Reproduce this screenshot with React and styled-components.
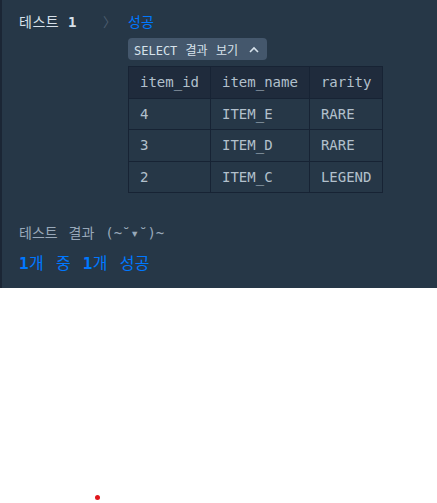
import React from 'react';
import styled, { createGlobalStyle } from 'styled-components';

const GlobalStyle = createGlobalStyle`
  html, body {
    margin: 0;
    padding: 0;
    background: #ffffff;
  }
  body {
    font-family: "DejaVu Sans Mono", "Noto Sans CJK KR", monospace;
  }
`

const Page = styled.div`
  position: relative;
  width: 437px;
  height: 503px;
`

const Panel = styled.section`
  background: #263747;
  border-left: 2px solid #1b2635;
  height: 288px;
  box-sizing: border-box;
  padding: 12px 0 0 17px;
  color: #d6e0ea;
  font-size: 14px;
`

const ResultRow = styled.div`
  display: grid;
  grid-template-columns: 84px 25px auto;
  align-items: start;
`

const Label = styled.div`
  line-height: 21px;
  letter-spacing: 0.5px;
  b {
    font-weight: bold;
  }
`

const Chevron = styled.div`
  line-height: 21px;
  color: #4c5d6f;
  font-size: 13px;
`

const Content = styled.div`
  display: flex;
  flex-direction: column;
  align-items: flex-start;
`

const Status = styled.div`
  line-height: 21px;
  color: ${(p) => p.color || '#0078ff'};
`

const ToggleButton = styled.button`
  margin-top: 5px;
  height: 22px;
  padding: 0 8px 0 6px;
  display: flex;
  align-items: center;
  gap: 11px;
  background: #44576c;
  color: #d7e2eb;
  border: none;
  border-radius: 4px;
  font-family: inherit;
  font-size: 12px;
  word-spacing: 1px;
  svg {
    display: block;
  }
`

const Table = styled.table`
  margin-top: 6px;
  border-collapse: collapse;
  font-size: 14px;
  th, td {
    border: 1px solid #172334;
    text-align: left;
    padding: 0 11px;
    height: 30.5px;
    white-space: nowrap;
  }
  th {
    background: #1f2b3c;
    color: #b2c0cc;
    font-weight: normal;
  }
  td {
    background: #263747;
    color: #b2c0cc;
  }
`

const Summary = styled.div`
  margin-top: 30px;
  display: flex;
  flex-direction: column;
  gap: 9px;
`

const SummaryTitle = styled.div`
  line-height: 21px;
  color: #98a8b9;
  word-spacing: 2.5px;
`

const SummaryResult = styled.div`
  line-height: 21px;
  font-size: 16px;
  color: #0078ff;
  word-spacing: 2px;
  letter-spacing: 0.3px;
  b {
    font-weight: bold;
  }
`

const Dot = styled.span`
  position: absolute;
  left: 95px;
  top: 495px;
  width: 5px;
  height: 5px;
  border-radius: 50%;
  background: #e0161b;
`

const rows = [
  { id: 4, name: 'ITEM_E', rarity: 'RARE' },
  { id: 3, name: 'ITEM_D', rarity: 'RARE' },
  { id: 2, name: 'ITEM_C', rarity: 'LEGEND' },
];

const App = () => (
  <Page>
    <GlobalStyle />
    <Panel>
      <ResultRow>
        <Label>테스트 <b>1</b></Label>
        <Chevron>〉</Chevron>
        <Content>
          <Status>성공</Status>
          <ToggleButton>
            SELECT 결과 보기
            <svg width="10" height="7" viewBox="0 0 10 7">
              <path d="M1 6 L5 2 L9 6" fill="none" stroke="#d7e2eb" strokeWidth="1.6" />
            </svg>
          </ToggleButton>
          <Table>
            <thead>
              <tr>
                <th>item_id</th>
                <th>item_name</th>
                <th>rarity</th>
              </tr>
            </thead>
            <tbody>
              {rows.map((r) => (
                <tr key={r.id}>
                  <td>{r.id}</td>
                  <td>{r.name}</td>
                  <td>{r.rarity}</td>
                </tr>
              ))}
            </tbody>
          </Table>
        </Content>
      </ResultRow>
      <Summary>
        <SummaryTitle>테스트 결과 (~˘▾˘)~</SummaryTitle>
        <SummaryResult><b>1</b>개 중 <b>1</b>개 성공</SummaryResult>
      </Summary>
    </Panel>
    <Dot />
  </Page>
);

export default App;
